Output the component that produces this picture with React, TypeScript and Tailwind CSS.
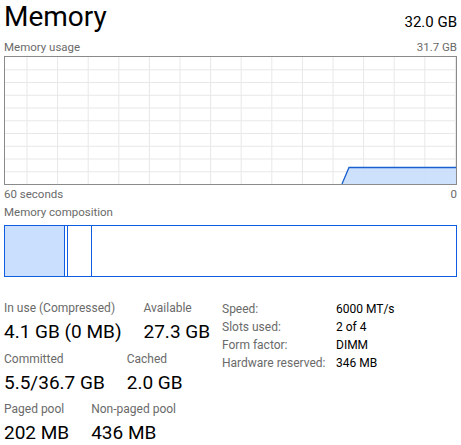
import React from "react";

const FONT = { fontFamily: 'Roboto, "Noto Sans", sans-serif' };

// chart geometry (inner size of the usage graph)
const CW = 451;
const CH = 127;
const V_LINES = Array.from({ length: 15 }, (_, i) => 22 + i * 30.6).filter((x) => x < CW);
const H_LINES = Array.from({ length: 9 }, (_, i) => (i + 1) * 12.75);

function UsageChart() {
  return (
    <div className="border border-[#8a8a8a] h-[129px] w-full bg-white">
      <svg width={CW} height={CH} viewBox={`0 0 ${CW} ${CH}`} className="block">
        {V_LINES.map((x) => (
          <line key={`v${x}`} x1={x} y1={0} x2={x} y2={CH} stroke="#e8e8e8" strokeWidth={1} />
        ))}
        {H_LINES.map((y) => (
          <line key={`h${y}`} x1={0} y1={y} x2={CW} y2={y} stroke="#e8e8e8" strokeWidth={1} />
        ))}
        <path d={`M337 ${CH} L344 110.5 L${CW} 110.5 L${CW} ${CH} Z`} fill="#c8defc" fillOpacity={0.9} />
        <path d={`M337 ${CH} L344 110.5 L${CW} 110.5`} fill="none" stroke="#1a5fd0" strokeWidth={1.3} />
      </svg>
    </div>
  );
}

function CompositionBar() {
  return (
    <div className="flex h-[52px] w-full border-[1.5px] border-[#0f5de0] bg-white">
      <div className="w-[60px] bg-[#c9dffd] border-r-[1.5px] border-[#0f5de0]" />
      <div className="w-[3px] border-r-[1.5px] border-[#0f5de0]" />
      <div className="w-[24px] border-r-[1.5px] border-[#0f5de0]" />
      <div className="flex-1" />
    </div>
  );
}

function Stat({ label, value }: { label: string; value: string }) {
  return (
    <div className="flex flex-col">
      <span className="text-[12px] leading-[17px] text-[#6a6a6a]">{label}</span>
      <span className="text-[19px] leading-[26px] text-black mt-[2px]">{value}</span>
    </div>
  );
}

const SPECS = [
  ["Speed:", "6000 MT/s"],
  ["Slots used:", "2 of 4"],
  ["Form factor:", "DIMM"],
  ["Hardware reserved:", "346 MB"],
];

export default function App() {
  return (
    <div className="w-[461px] h-[445px] bg-white overflow-hidden px-[4px]" style={FONT}>
      <div className="flex items-end justify-between h-[34px]">
        <span className="text-[28px] leading-[34px] text-black">Memory</span>
        <span className="text-[15px] leading-[20px] text-black mb-[2px]">32.0 GB</span>
      </div>
      <div className="flex justify-between mt-[4px] h-[18px] text-[11.5px] leading-[18px] text-[#6a6a6a]">
        <span>Memory usage</span>
        <span>31.7 GB</span>
      </div>
      <UsageChart />
      <div className="flex justify-between h-[18px] text-[11.5px] leading-[18px] text-[#6a6a6a]">
        <span>60 seconds</span>
        <span>0</span>
      </div>
      <div className="h-[18px] text-[11.5px] leading-[18px] text-[#6a6a6a]">Memory composition</div>
      <div className="mt-[4px]">
        <CompositionBar />
      </div>
      <div className="flex mt-[23px]">
        <div className="flex flex-col gap-[5.5px] w-[218px]">
          <div className="flex gap-[22px]">
            <Stat label="In use (Compressed)" value="4.1 GB (0 MB)" />
            <Stat label="Available" value="27.3 GB" />
          </div>
          <div className="flex gap-[22px]">
            <Stat label="Committed" value="5.5/36.7 GB" />
            <Stat label="Cached" value="2.0 GB" />
          </div>
          <div className="flex gap-[22px]">
            <Stat label="Paged pool" value="202 MB" />
            <Stat label="Non-paged pool" value="436 MB" />
          </div>
        </div>
        <div className="flex flex-col text-[12px] leading-[18px]">
          {SPECS.map(([k, v]) => (
            <div key={k} className="flex">
              <span className="w-[114px] text-[#6a6a6a]">{k}</span>
              <span className="text-black">{v}</span>
            </div>
          ))}
        </div>
      </div>
    </div>
  );
}
